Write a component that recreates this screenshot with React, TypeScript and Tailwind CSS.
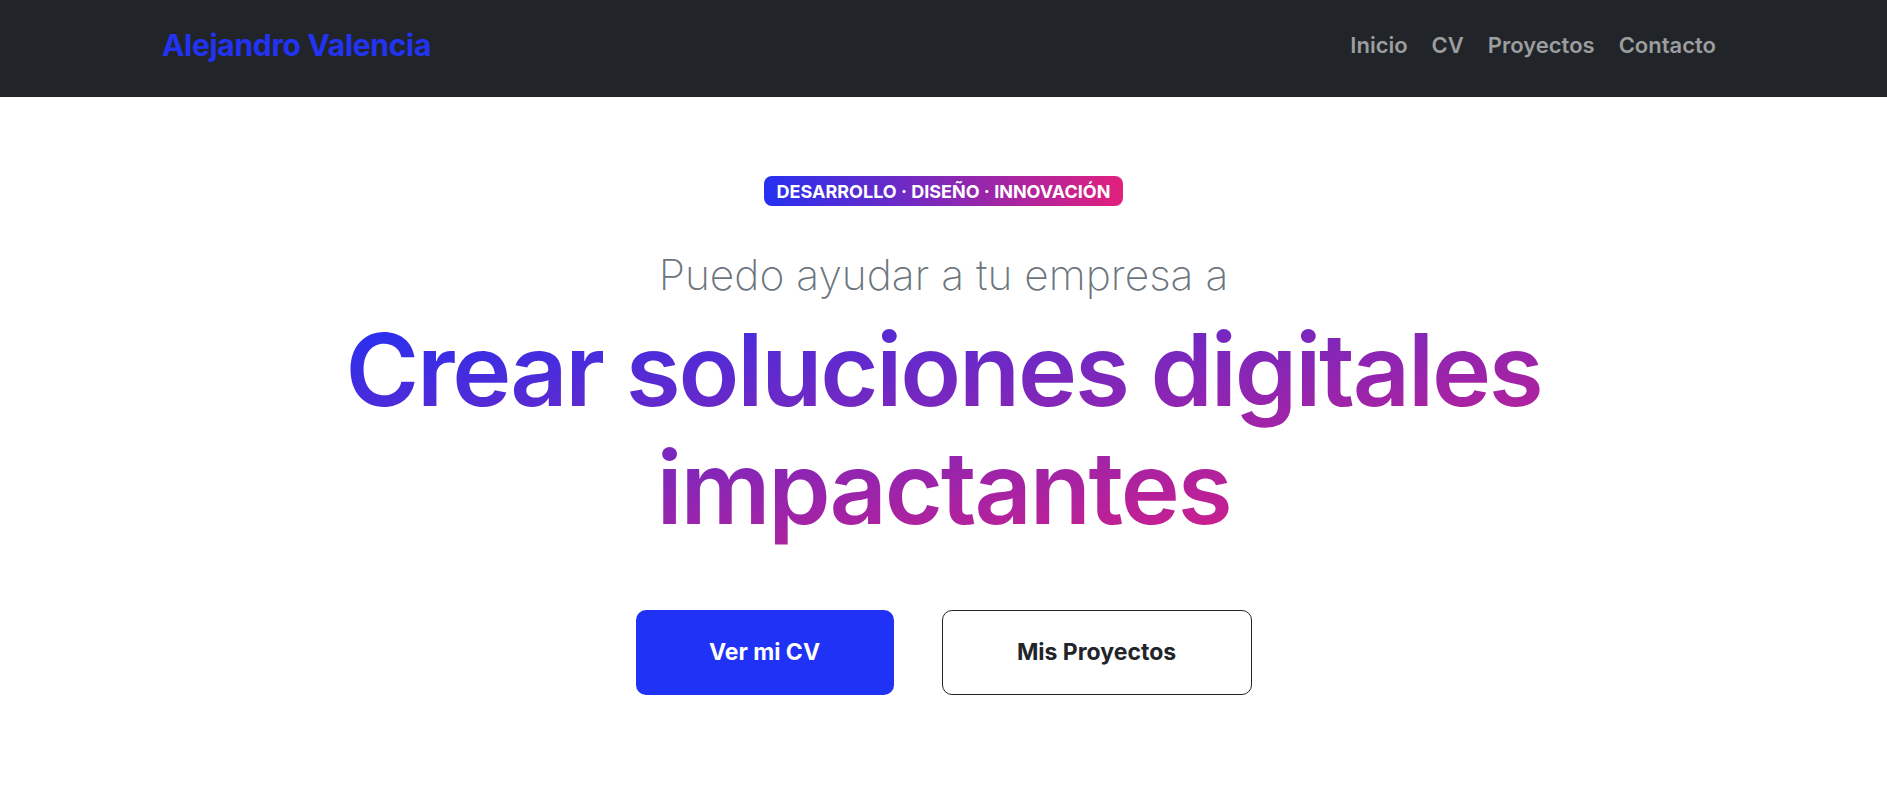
const links = ["Inicio", "CV", "Proyectos", "Contacto"];

const App = () => {
    return (
        <div className="min-h-screen bg-white" style={{ fontFamily: "Inter, 'Noto Sans', sans-serif" }}>
            {/* Navbar */}
            <nav className="h-[97px] bg-[#212529] flex items-center justify-between pl-[162px] pr-[159px] pb-[6px]">
                <a href="#" className="text-[30px] font-bold text-[#2233f2] tracking-[-0.3px]">
                    Alejandro Valencia
                </a>
                <ul className="flex items-center">
                    {links.map((link) => (
                        <li key={link}>
                            <a href="#" className="block px-[12px] py-2 text-[22px] font-semibold text-[#9b9d9f] hover:text-white">
                                {link}
                            </a>
                        </li>
                    ))}
                </ul>
            </nav>

            {/* Hero */}
            <section className="flex flex-col items-center text-center">
                <span className="mt-[79px] h-[30px] px-[13px] flex items-center rounded-[8px] bg-[linear-gradient(to_right,#2530f0,#e2207e)] text-white text-[18px] font-bold">
                    DESARROLLO · DISEÑO · INNOVACIÓN
                </span>
                <p className="mt-[44px] text-[42.5px] leading-[50px] font-extralight text-[#6c757d]">
                    Puedo ayudar a tu empresa a
                </p>
                <h1 className="mt-[11px] inline-block text-[100px] leading-[118px] font-semibold tracking-[-2.2px] bg-[linear-gradient(to_bottom_right,#1f30f5,#ee1c78)] bg-clip-text text-transparent">
                    Crear soluciones digitales
                    <br />
                    impactantes
                </h1>
                <div className="mt-[63px] flex gap-[48px]">
                    <a href="#" className="w-[258px] h-[85px] flex items-center justify-center rounded-[10px] bg-[#1f32f5] text-white text-[23px] font-bold">
                        Ver mi CV
                    </a>
                    <a href="#" className="w-[310px] h-[85px] flex items-center justify-center rounded-[10px] border border-[#212529] text-[#212529] text-[23px] font-bold">
                        Mis Proyectos
                    </a>
                </div>
            </section>
        </div>
    );
};

export default App;
